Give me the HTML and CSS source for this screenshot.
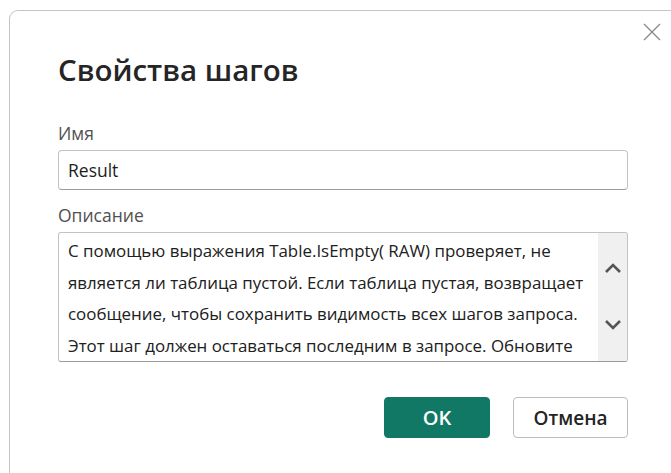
FILE: index.html
```html
<!DOCTYPE html>
<html lang="ru">
<head>
<meta charset="utf-8">
<title>Свойства шагов</title>
<link rel="stylesheet" href="styles.css">
</head>
<body>
<div class="dialog">
  <div class="dialog-top">
    <button class="close-btn" aria-label="Закрыть">
      <svg width="18" height="18" viewBox="0 0 18 18"><path d="M1 1 L17 17 M17 1 L1 17" stroke="#8a8a8a" stroke-width="1.3" fill="none"/></svg>
    </button>
  </div>
  <div class="dialog-body">
    <h1 class="title">Свойства шагов</h1>
    <label class="field-label">Имя</label>
    <div class="input">Result</div>
    <label class="field-label desc-label">Описание</label>
    <div class="textarea">
      <div class="textarea-text">
        <p>С помощью выражения Table.IsEmpty( RAW) проверяет, не</p>
        <p>является ли таблица пустой. Если таблица пустая, возвращает</p>
        <p>сообщение, чтобы сохранить видимость всех шагов запроса.</p>
        <p>Этот шаг должен оставаться последним в запросе. Обновите</p>
      </div>
      <div class="scrollbar">
        <svg width="18" height="12" viewBox="0 0 18 12"><path d="M2 10 L9 3 L16 10" stroke="#555" stroke-width="2.6" fill="none"/></svg>
        <svg width="18" height="12" viewBox="0 0 18 12"><path d="M2 2 L9 9 L16 2" stroke="#555" stroke-width="2.6" fill="none"/></svg>
      </div>
    </div>
    <div class="actions">
      <button class="btn btn-primary">OK</button>
      <button class="btn btn-secondary">Отмена</button>
    </div>
  </div>
</div>
</body>
</html>
```

FILE: styles.css
```css
html, body {
  margin: 0;
  padding: 0;
  background: #ffffff;
  overflow: hidden;
  font-family: "Open Sans", "Noto Sans", "Liberation Sans", sans-serif;
  color: #242424;
}

.dialog {
  margin: 10px 0 0 9px;
  width: 720px;
  height: 520px;
  border-top: 1px solid #c4c4c4;
  border-left: 1px solid #c4c4c4;
  border-top-left-radius: 9px;
  box-sizing: border-box;
}

.dialog-top {
  display: flex;
  justify-content: flex-start;
  padding: 12px 0 0 633px;
  height: 18px;
}

.close-btn {
  width: 18px;
  height: 18px;
  padding: 0;
  border: none;
  background: none;
  display: block;
}

.close-btn svg {
  display: block;
}

.dialog-body {
  padding-left: 48px;
  width: 570px;
  display: flex;
  flex-direction: column;
}

.title {
  margin: 9px 0 0 0;
  font-size: 29.5px;
  line-height: 40px;
  font-weight: 600;
  color: #252525;
}

.field-label {
  display: block;
  margin-top: 32px;
  margin-bottom: 6px;
  font-size: 17.5px;
  line-height: 22px;
  color: #505050;
}

.desc-label {
  margin-top: 14px;
}

.input {
  height: 40px;
  box-sizing: border-box;
  border: 1px solid #c2c2c2;
  border-bottom-color: #9a9a9a;
  border-radius: 4px;
  padding: 0 9px;
  font-size: 17.5px;
  line-height: 38px;
  color: #1e1e1e;
}

.textarea {
  height: 130px;
  box-sizing: border-box;
  border: 1px solid #c2c2c2;
  border-bottom-color: #9a9a9a;
  border-radius: 3px;
  display: flex;
  overflow: hidden;
}

.textarea-text {
  flex: 1;
  padding: 2px 0 0 9px;
  font-size: 16.9px;
  line-height: 31.6px;
  color: #202020;
}

.textarea-text p {
  margin: 0;
  white-space: nowrap;
}

.scrollbar {
  width: 29px;
  background: #f0f0f0;
  display: flex;
  flex-direction: column;
  align-items: center;
  justify-content: space-between;
  padding: 29px 0 30px;
}

.scrollbar svg {
  display: block;
}

.actions {
  margin-top: 35px;
  display: flex;
  justify-content: flex-end;
  gap: 23px;
}

.btn {
  height: 41px;
  box-sizing: border-box;
  border-radius: 4px;
  font-family: inherit;
  font-size: 19px;
  font-weight: 600;
  padding: 0;
}

.btn-primary {
  width: 106px;
  background: #117865;
  border: 1px solid #117865;
  color: #ffffff;
  font-size: 20px;
}

.btn-secondary {
  width: 115px;
  background: #ffffff;
  border: 1px solid #bcbcbc;
  color: #242424;
}
```
